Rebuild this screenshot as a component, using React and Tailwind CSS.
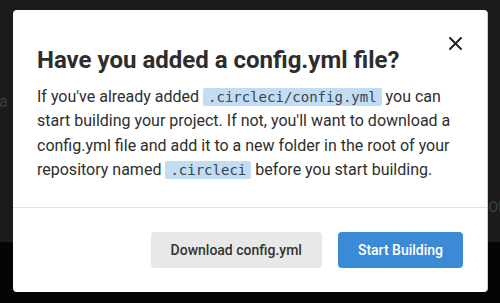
import React from 'react';

const Code = ({ children }) => (
  <code
    className="rounded-[2px] bg-[#c2ddf3] px-[5px] py-[1px] text-[14px] text-[#3a4450]"
    style={{ fontFamily: '"DejaVu Sans Mono", "Liberation Mono", monospace' }}
  >
    {children}
  </code>
);

export default function App() {
  return (
    <div className="relative h-[303px] w-[500px] overflow-hidden bg-[#050505] font-['Roboto',sans-serif]">
      {/* page behind the overlay */}
      <div className="flex h-[242px] flex-col justify-between bg-[#1b1b1b]">
        <div className="pt-[90px] text-[16px] text-[#3a3a3a]">
          <span className="-ml-[6px]">ra</span>
        </div>
        <div className="flex justify-end pb-[24px] text-[14px] font-medium text-[#3a3a3a]">
          <span className="-mr-[8px]">ON</span>
        </div>
      </div>

      {/* modal */}
      <div className="absolute left-[13px] top-[10px] w-[474px] rounded-[4px] bg-white shadow-[1px_0_0_#cfcfcf]">
        <button className="absolute right-[22px] top-[23px] flex h-[20px] w-[20px] items-center justify-center text-[#222]">
          <svg width="13" height="13" viewBox="0 0 13 13" fill="none">
            <path d="M1 1L12 12M12 1L1 12" stroke="currentColor" strokeWidth="2" strokeLinecap="round" />
          </svg>
        </button>

        <div className="px-6 pt-[35px] pb-[25px]">
          <h2 className="text-[24px] font-bold leading-[30px] text-[#2d2d2d]">
            Have you added a config.yml file?
          </h2>
          <p className="mt-[10px] text-[16px] leading-[24.3px] text-[#2e2e2e]">
            If you've already added <Code>.circleci/config.yml</Code> you can start building your project. If
            not, you'll want to download a config.yml file and add it to a new folder in the root of your
            repository named <Code>.circleci</Code> before you start building.
          </p>
        </div>

        <div className="h-px bg-[#e1e1e1]" />

        <div className="flex justify-end gap-4 p-6">
          <button className="h-9 rounded-[4px] bg-[#e8e8e8] px-5 text-[14px] font-medium text-[#333]">
            Download config.yml
          </button>
          <button className="h-9 rounded-[4px] bg-[#3b8ad5] px-5 text-[14px] font-medium text-white">
            Start Building
          </button>
        </div>
      </div>
    </div>
  );
}
